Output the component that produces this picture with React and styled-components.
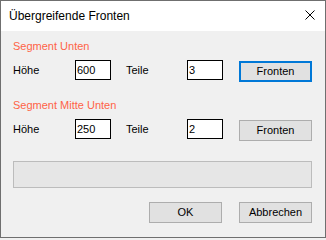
import React from "react";
import styled, { createGlobalStyle } from "styled-components";

const Global = createGlobalStyle`
  html, body { margin: 0; padding: 0; background: #f0f0f0; }
  * { box-sizing: border-box; }
`;

const Window = styled.div`
  width: 326px;
  height: 238px;
  border: 1px solid #6f6f6f;
  background: #f0f0f0;
  display: flex;
  flex-direction: column;
  font-family: "Liberation Sans", Arial, sans-serif;
  font-size: 11px;
  color: #000;
  overflow: hidden;
`;

const TitleBar = styled.div`
  height: 30px;
  flex: none;
  background: #fff;
  display: flex;
  align-items: center;
  justify-content: space-between;
  padding: 0 10px 1px 8px;
`;

const Title = styled.span`
  font-size: 12px;
  line-height: 16px;
  color: #000;
`;

const CloseButton = styled.span`
  display: flex;
  width: 10px;
  height: 10px;
  margin-top: -1px;
`;

const Body = styled.div`
  flex: 1;
  display: flex;
  flex-direction: column;
  padding: 9px 13px 0 12px;
`;

const GroupLabel = styled.div`
  height: 13px;
  line-height: 13px;
  color: #ff6347;
  margin-top: ${(p) => p.$top}px;
`;

const Row = styled.div`
  display: flex;
  align-items: flex-start;
  height: 21px;
  margin-top: 7px;
`;

const FieldLabel = styled.span`
  width: ${(p) => p.$w}px;
  margin-left: ${(p) => p.$ml || 0}px;
  line-height: 20px;
  height: 20px;
`;

const Input = styled.div`
  width: 36px;
  height: 20px;
  border: 1px solid #000;
  background: #fff;
  padding-left: 1px;
  line-height: 18px;
`;

const Button = styled.div`
  width: 73px;
  height: 21px;
  margin-left: ${(p) => p.$ml || 0}px;
  margin-top: ${(p) => p.$mt || 0}px;
  background: #e1e1e1;
  border: ${(p) => (p.$focused ? "2px solid #0078d7" : "1px solid #adadad")};
  display: flex;
  align-items: center;
  justify-content: center;
  line-height: 13px;
`;

const Progress = styled.div`
  height: 27px;
  margin-top: 21px;
  border: 1px solid #bcbcbc;
  background: #e6e6e6;
`;

const ButtonRow = styled.div`
  display: flex;
  justify-content: flex-end;
  gap: 17px;
  margin-top: 14px;
`;

const segments = [
  { name: "Segment Unten", hoehe: "600", teile: "3", focused: true, top: 0 },
  { name: "Segment Mitte Unten", hoehe: "250", teile: "2", focused: false, top: 18 },
];

export default function App() {
  return (
    <>
      <Global />
      <Window>
        <TitleBar>
          <Title>Übergreifende Fronten</Title>
          <CloseButton>
            <svg width="10" height="10" viewBox="0 0 10 10">
              <path d="M0.5 0.5 L9.5 9.5 M9.5 0.5 L0.5 9.5" stroke="#000" strokeWidth="1" />
            </svg>
          </CloseButton>
        </TitleBar>
        <Body>
          {segments.map((s) => (
            <React.Fragment key={s.name}>
              <GroupLabel $top={s.top}>{s.name}</GroupLabel>
              <Row>
                <FieldLabel $w={62}>Höhe</FieldLabel>
                <Input>{s.hoehe}</Input>
                <FieldLabel $w={61} $ml={15}>Teile</FieldLabel>
                <Input>{s.teile}</Input>
                <Button $ml={16} $mt={1} $focused={s.focused}>Fronten</Button>
              </Row>
            </React.Fragment>
          ))}
          <Progress />
          <ButtonRow>
            <Button>OK</Button>
            <Button>Abbrechen</Button>
          </ButtonRow>
        </Body>
      </Window>
    </>
  );
}
